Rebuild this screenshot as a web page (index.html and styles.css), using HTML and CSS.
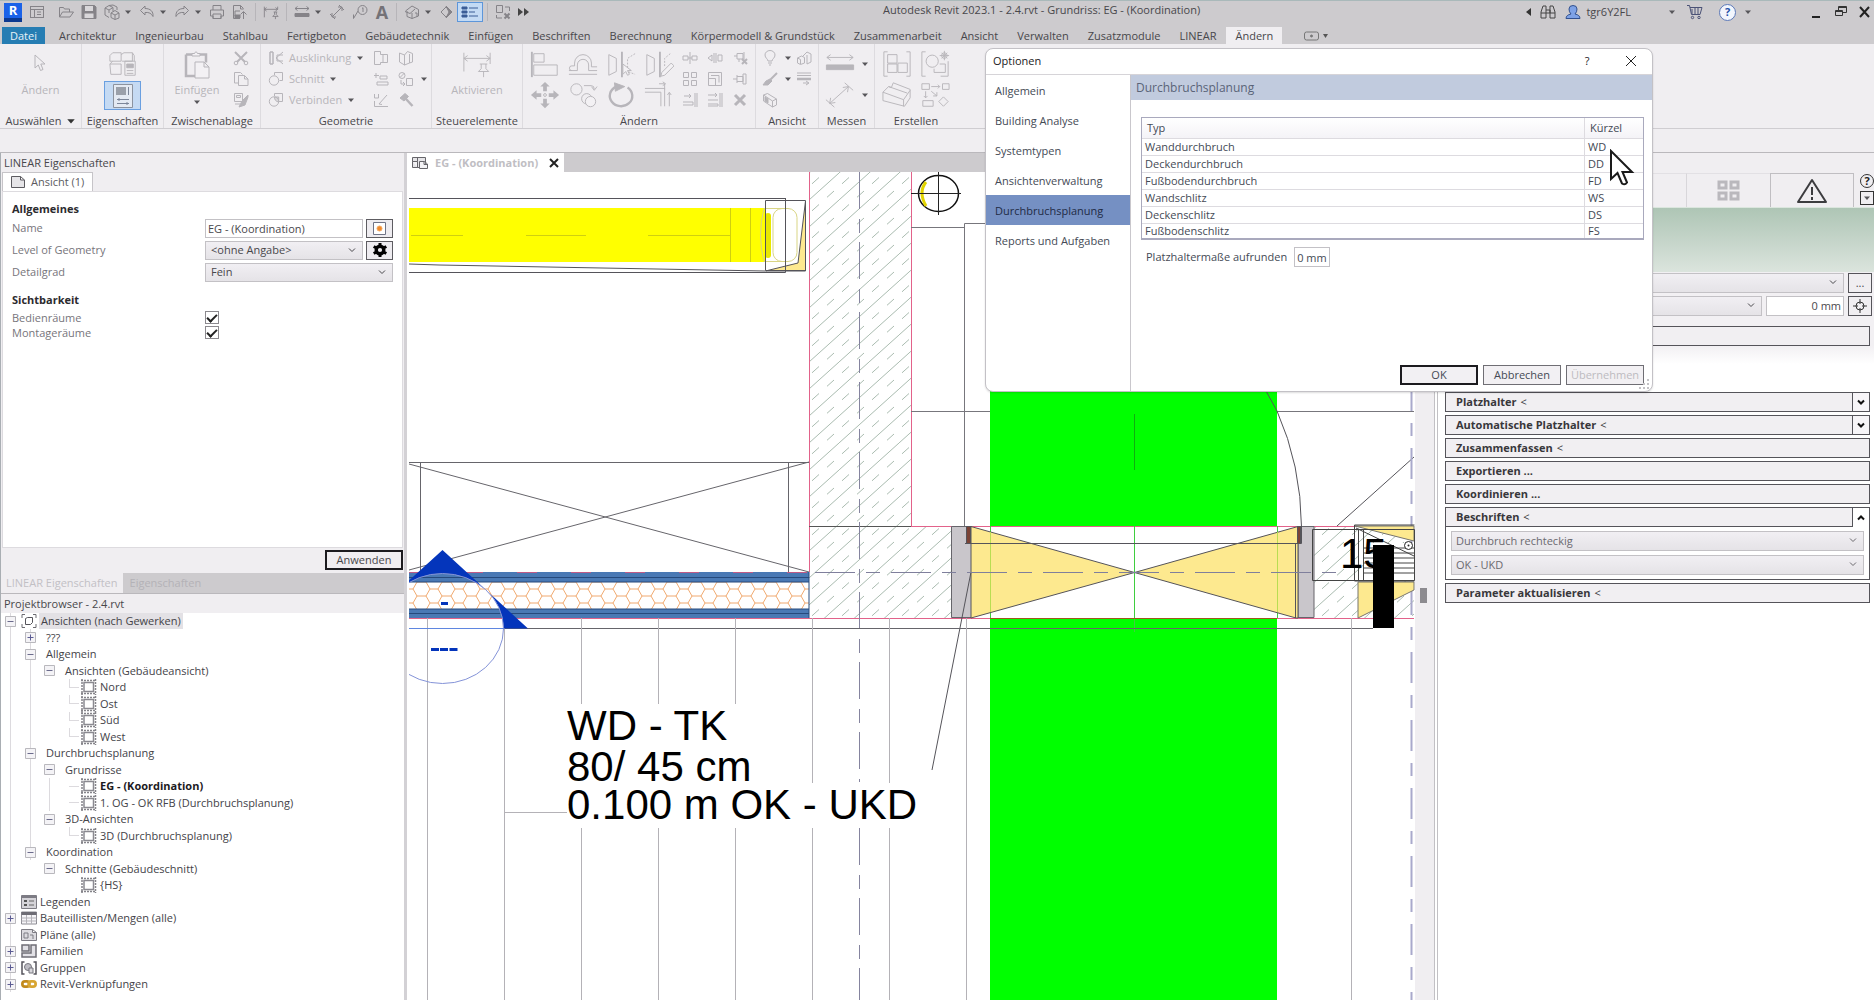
FILE: index.html
```html
<!DOCTYPE html>
<html lang="de">
<head>
<meta charset="utf-8">
<title>Autodesk Revit 2023.1 - 2.4.rvt - Grundriss: EG - (Koordination)</title>
<link rel="stylesheet" href="styles.css">
</head>
<body>
<svg class="defs" width="0" height="0" aria-hidden="true">
  <symbol id="caret" viewBox="0 0 8 8"><path d="M1 2.500h6L4 6z" fill="currentColor" stroke="none"/></symbol>
  <symbol id="chev" viewBox="0 0 10 8"><path d="M2 2.500l3 3 3-3"/></symbol>
  <symbol id="home" viewBox="0 0 16 16"><rect x="1.500" y="2.500" width="13" height="11"/><path d="M1.500 5.500h13M5.500 5.500v8M8 8h4M8 10.500h4" /></symbol>
  <symbol id="open" viewBox="0 0 16 16"><path d="M1.500 13V3.500h4l1 1.500h5v3M1.500 13l3-5h11l-3.500 5z"/></symbol>
  <symbol id="save" viewBox="0 0 16 16"><path d="M1 1.500h12.500L15 3v11.500H1z" fill="currentColor"/><path d="M4 2h8v5H4z" fill="#d9d7da" stroke="none"/><path d="M3.500 9.500h9v4.500h-9z" fill="#d9d7da" stroke="none"/></symbol>
  <symbol id="sync" viewBox="0 0 16 16"><path d="M1 4l4-2.500 4 2v4M1 4v7l4 2.500M1 4l4 2 4-2.500M5 6v3M7 9l4-2.500L15 9v5l-4 1.500L7 13.500zM7 9l4 2 4-2M11 11v4.500M5 1.500L9 1l4 2v3"/></symbol>
  <symbol id="undo" viewBox="0 0 16 16"><path d="M6 2L1.500 6.500 6 11V8.500c4-.5 6.500 1 8 4 .5-5-2.500-8-8-8z"/></symbol>
  <symbol id="redo" viewBox="0 0 16 16"><path d="M10 2l4.500 4.500L10 11V8.500c-4-.5-6.500 1-8 4-.5-5 2.500-8 8-8z"/></symbol>
  <symbol id="print" viewBox="0 0 16 16"><path d="M4 6V1.500h8V6M1.500 6h13v6h-2.500v2.500H4V12H1.500zM4 10h8v4.500H4z"/></symbol>
  <symbol id="export" viewBox="0 0 16 16"><path d="M8 14.500H1.500v-13h7l3 3M8.500 1.500V5h3M3 12V7h5M11.500 15V8M8.500 10.500l3-3 3 3"/><path d="M3 11h5v3H3z" fill="currentColor"/></symbol>
  <symbol id="dimpin" viewBox="0 0 18 16"><path d="M1.500 2v12M16.500 2v3M1.500 5h15M4 3L1.500 5 4 7M14 3l2.500 2L14 7M12 8h4M13 8v3l-2 2h6l-2-2V8M14 13v3"/></symbol>
  <symbol id="measure" viewBox="0 0 16 16"><path d="M1 4.500h14M3.500 2.500l-2.500 2 2.500 2M12.500 2.500l2.500 2-2.500 2"/><path d="M1 9.500h14v3H1z" fill="currentColor"/></symbol>
  <symbol id="aligned" viewBox="0 0 16 16"><path d="M3 13L13 3M3 13v-4M3 13h4M13 3v4M13 3H9M1 10l5 5M10 1l5 5"/></symbol>
  <symbol id="tag" viewBox="0 0 16 16"><circle cx="10.500" cy="6" r="4.500"/><path d="M6 7L1.500 14.500M1.500 14.500v-4M10 4.500l1-.8V8"/></symbol>
  <symbol id="house" viewBox="0 0 16 16"><path d="M1.500 7L8 2l6.500 3.500V12L8 14.500l-5-2V7M1 7.500l5 2L11 5M8 14.500V9M11 9h2v4"/></symbol>
  <symbol id="section" viewBox="0 0 16 16"><path d="M3 8l5-5 5 5-5 5z"/><path d="M8 2l6 6-6 6 3-6z" fill="currentColor"/></symbol>
  <symbol id="lines" viewBox="0 0 24 18"><path d="M4 4h5v2H4zM4 8h5v2H4zM4 12h5v2H4z" fill="#3a5d96" stroke="#3a5d96"/><path d="M11 5h9M11 9h6M11 13h9" stroke="#3a5d96"/></symbol>
  <symbol id="closewin" viewBox="0 0 16 16"><path d="M1.500 1.500h6v7h-6zM10 3h4.500v4M1.500 11v3H7"/><path d="M9.500 9.500l5 5M14.500 9.500l-5 5" stroke-width="2"/></symbol>
  <symbol id="cursor" viewBox="0 0 16 18"><path d="M3 1v13l3.300-3 2.200 5.500 2.500-1L8.800 10H13z"/></symbol>
  <symbol id="typeprops" viewBox="0 0 32 28"><path d="M2 5l3-3h9v9H2zM14 4l3-2h9v9H15M2 14h12v11H3zM2 14l3-3M26 2l2 3v6"/><path d="M18 11h11v15H18z"/><path d="M20 14h7v4h-7z" fill="currentColor"/><path d="M20 21h7M20 24h7"/></symbol>
  <symbol id="props" viewBox="0 0 22 26"><path d="M1.500 1.500h19v23h-19z" fill="#e4eaf3" stroke="#8c939f"/><path d="M4 4h10v8H4z" fill="#9aa0aa" stroke="none"/><path d="M16.500 4v8M5 16.500h12M5 20.500h12M7 15v3M15 19v3" stroke="#7c8699"/></symbol>
  <symbol id="paste" viewBox="0 0 28 30"><path d="M3 4.500h20v8M3 4.500V26h9" stroke-width="2.500"/><path d="M9 6V3.500h2.500Q13 0 14.500 3.500H17V6zM12 12h9l5 5v11H12zM21 12v5h5" fill="#f3f1f4"/></symbol>
  <symbol id="cut" viewBox="0 0 16 16"><path d="M2 2l10 10M14 2L4 12" stroke-width="2"/><circle cx="3" cy="13" r="1.800"/><circle cx="13" cy="13" r="1.800"/></symbol>
  <symbol id="copy" viewBox="0 0 16 16"><path d="M5 12H1.500V1.500h6l2 2M5.500 4.500h6l3.500 3.500v6.500H5.500zM11.500 4.500V8H15"/></symbol>
  <symbol id="match" viewBox="0 0 16 16"><path d="M1.500 1.500h8v8h-8zM3.500 3.500h4v2h-4zM2 12h5"/><path d="M15 3L9 9l-3 6 6-2 3-8z" fill="currentColor"/></symbol>
  <symbol id="cope" viewBox="0 0 16 16"><path d="M2 2v12M5 2v12M2 2h3M2 14h3" stroke-width="1.500"/><path d="M15 2L8 8l7 6M15 5H9v6h6"/></symbol>
  <symbol id="cutgeo" viewBox="0 0 16 16"><path d="M6.500 4V1.500h8v8h-3"/><circle cx="6" cy="9.500" r="4.700"/></symbol>
  <symbol id="joingeo" viewBox="0 0 16 16"><path d="M6.500 4V1.500h8v8h-3.500"/><circle cx="6" cy="9.500" r="4.700"/><path d="M6.500 5h4.200v5a5 5 0 0 1-4.200-5z" fill="currentColor" fill-opacity=".4"/></symbol>
  <symbol id="wall1" viewBox="0 0 16 16"><path d="M1.500 1.500h6v3h7v8h-7v2h-6zM10 5v7"/></symbol>
  <symbol id="wall2" viewBox="0 0 16 16"><path d="M1.500 3l5 2 3-3.500 5 2V12l-3 1-5 2-5-3zM6.500 5v10M11.500 4v9"/></symbol>
  <symbol id="beam" viewBox="0 0 16 16"><path d="M3 2v5M1 4.500h5M7 5h7v3H7zM4 11h11v3H4z"/></symbol>
  <symbol id="roof" viewBox="0 0 16 16"><circle cx="4" cy="4.500" r="3"/><path d="M2 6.500L6.500 2M8.500 7.500h6v7h-6zM3 9v4h4M5 11l2 2-2 2"/></symbol>
  <symbol id="split" viewBox="0 0 16 16"><path d="M1.500 2v4h4V2M1.500 9v5.500H15M6 12l8-9M6 12l3 .5"/></symbol>
  <symbol id="hammer" viewBox="0 0 16 16"><path d="M2 6l5-4.500 3.500 3L6 9z" fill="currentColor"/><path d="M8 7l6.500 7" stroke-width="2.500"/></symbol>
  <symbol id="activate" viewBox="0 0 32 28"><path d="M2 2v20M30 2v12M2 8h28M6 5L2 8l4 3M26 5l4 3-4 3M19 14h8M20.500 14v5l-3 3h11l-3-3v-5M23 22v6"/></symbol>
  <symbol id="align" viewBox="0 0 32 28"><path d="M2 1v27" stroke-width="2"/><path d="M4 3h11v9H4zM4 15h25v11H4z"/></symbol>
  <symbol id="offset" viewBox="0 0 32 28"><path d="M1 25h30M1 21h9v-6a6 6 0 0 1 12 0v6h9M4 21a2.500 2.500 0 0 1 0-5h3v-3a9 9 0 0 1 18 0v4h6"/></symbol>
  <symbol id="mirror1" viewBox="0 0 32 28"><path d="M3 4l8 4v14l-8 4z"/><path d="M17 1v27" stroke-width="2"/><path d="M31 3l-8 5v14l8 3" stroke-dasharray="2 1.500"/><path d="M18 14v11l3-3 2 4 2-1-2-4h4z" fill="#f3f1f4"/></symbol>
  <symbol id="mirror2" viewBox="0 0 32 28"><path d="M3 4l8 4v14l-8 4z"/><path d="M17 1v27" stroke-width="2"/><path d="M28 3l-6 5v9" stroke-dasharray="2 1.500"/><path d="M29 13l3 3-10 10-4 1 1-4z" fill="#f3f1f4"/></symbol>
  <symbol id="move" viewBox="0 0 32 28"><path d="M16 0l5 5h-3v5h-4V5h-3zM16 28l5-5h-3v-5h-4v5h-3zM1 14l6-5v3h5v4H7v3zM31 14l-6-5v3h-5v4h5v3z" fill="currentColor" stroke="none"/><circle cx="16" cy="14" r="1.500"/></symbol>
  <symbol id="copyobj" viewBox="0 0 32 28"><circle cx="9" cy="8" r="6"/><circle cx="20" cy="18" r="5.500"/><circle cx="24" cy="21" r="5.500" fill="#f3f1f4"/><path d="M17 4h8q3 0 3 4M25 5l3 4 3-4"/></symbol>
  <symbol id="rotate" viewBox="0 0 32 28"><path d="M11 5a12 11 0 1 0 12 1" stroke-width="2.500"/><path d="M9 1l11 4-10 5z" fill="currentColor"/></symbol>
  <symbol id="trim" viewBox="0 0 32 28"><path d="M1 7h21v19M1 11h17v15M22 2v6M16 2h6M20 0l3 2-3 2M27 26V12M25 14l2-3 2 3"/></symbol>
  <symbol id="splitel" viewBox="0 0 16 16"><path d="M8 2v12M1 6h5v4H1zM10 6h5v4h-5zM6 8h4"/></symbol>
  <symbol id="gap" viewBox="0 0 16 16"><path d="M1 8l4-3v6zM7 3v10M9 3v10M11 5h4v6h-4z"/></symbol>
  <symbol id="unpin" viewBox="0 0 16 16"><path d="M2 6h3V3.500h6V9H5V6M7 9v3M12 2v8"/><path d="M10 9l5 5M15 9l-5 5" stroke-width="2"/></symbol>
  <symbol id="array" viewBox="0 0 16 16"><path d="M1.500 1.500h5v5h-5zM9.500 1.500h5v5h-5zM1.500 9.500h5v5h-5zM9.500 9.500h5v5h-5z"/></symbol>
  <symbol id="scale" viewBox="0 0 16 16"><path d="M1.500 1.500h13v13h-13zM1.500 7.500h7v7M4 4.500h8v7" /></symbol>
  <symbol id="pin" viewBox="0 0 16 16"><path d="M1 8h4M5 4v8M5 5.500h6v5H5M11 3v10h3V3z"/></symbol>
  <symbol id="trim1" viewBox="0 0 16 16"><path d="M13 1v14M15 1v14M2 4h7M7 2l2 2-2 2M1 10h10v3H1"/></symbol>
  <symbol id="trim2" viewBox="0 0 16 16"><path d="M13 1v14M15 1v14M1 3h9M8 1l2 2-2 2M1 8h10M1 12h10v2H1"/></symbol>
  <symbol id="delete" viewBox="0 0 16 16"><path d="M3 3l10 10M13 3L3 13" stroke-width="3"/></symbol>
  <symbol id="bulb" viewBox="0 0 16 16"><path d="M6 11c0-2-3-3-3-6a5 4.500 0 0 1 10 0c0 3-3 4-3 6zM6 13h4M7 15h2"/></symbol>
  <symbol id="brush" viewBox="0 0 16 16"><path d="M15 2L8 9" stroke-width="2"/><path d="M8 8l2 2-4 4H1l3-4z" fill="currentColor"/></symbol>
  <symbol id="box" viewBox="0 0 16 16"><path d="M1.500 3l4-1.500 9 5.500v6l-4 2-9-6zM1.500 3l9 6 4-2M10.500 9v6"/><path d="M3 5l3 2v4L3 9z" fill="currentColor"/></symbol>
  <symbol id="boxes" viewBox="0 0 16 16"><path d="M1.500 8l4-2 3 1.500V13l-4 1.500-3-1.500zM7 6l4-4 4 2v8l-4 2M11 5v9M1.500 8l3 1.500V14"/></symbol>
  <symbol id="linew" viewBox="0 0 16 16"><path d="M1 2h14M1 4.500h14"/><path d="M1 8h14" stroke-width="2.500"/><path d="M7 12h5M10 10l3 2-3 2"/></symbol>
  <symbol id="mea1" viewBox="0 0 32 24"><path d="M2 5h28M6 2L2 5l4 3M26 2l4 3-4 3"/><path d="M1.500 13h29v5h-29z" fill="currentColor"/></symbol>
  <symbol id="mea2" viewBox="0 0 32 28"><path d="M5 23L25 5M5 23l1-6M5 23l6-1M25 5l-1 6M25 5l-6 1M1 19l9 8M21 1l9 8"/></symbol>
  <symbol id="grp1" viewBox="0 0 32 28"><path d="M6 1H2v26h4M26 1h4v26h-4M6 4h10v9H6zM6 14h10v9H6zM17 13h10v10H17z"/></symbol>
  <symbol id="grp2" viewBox="0 0 32 28"><path d="M6 1H2v26h4M22 27h8V11M21 14h6v9H15v-4"/><circle cx="13" cy="11" r="6.500"/><circle cx="26" cy="5" r="3"/><path d="M26 0v10M21 5h10M23 2l6 6M29 2l-6 6"/></symbol>
  <symbol id="asm" viewBox="0 0 32 28"><path d="M1 11l6-6 3 1 2-5 18 7v9l-6 9L1 20zM1 11l22 8 7-10M23 19v7M7 5l20 7"/></symbol>
  <symbol id="similar" viewBox="0 0 32 28"><path d="M2 2h8v6H2zM24 2h7v6h-7zM3 20h11v6H3zM25 16l5 5-5 5-5-5zM12 5h9M19 3l2 2-2 2M6 10v7M4 15l2 2 2-2M12 10l6 5M18 11v4h-4"/></symbol>
  <symbol id="sheet" viewBox="0 0 16 14"><path d="M1.500 1.500h9l4 3.500v7.500h-13zM10.500 1.500V5h4" fill="#e6e5e8"/></symbol>
  <symbol id="viewtab" viewBox="0 0 16 14"><path d="M.5 1.500h13v10H.5z" fill="#e6e5e8"/><path d="M.5 5.500h5v6M5.500 1.500v4M7.500 12.500v-7h5l3 2.500v4.500zM12 5.500v3h3" fill="#f4f3f6"/></symbol>
  <symbol id="minus" viewBox="0 0 11 11"><path d="M.5.5h10v10H.5z" fill="#f4f3f6" stroke="#b9b8bd"/><path d="M2.500 5.500h6" stroke="#6b6b8c"/></symbol>
  <symbol id="plus" viewBox="0 0 11 11"><path d="M.5.5h10v10H.5z" fill="#f4f3f6" stroke="#b9b8bd"/><path d="M2.500 5.500h6M5.500 2.500v6" stroke="#5c5c93"/></symbol>
  <symbol id="view" viewBox="0 0 17 16"><path d="M1 1.500h15M2 0v16M15.500 0v16M1 14.500h15" stroke="#85848a" stroke-width="1.500" stroke-dasharray="2 1"/><rect x="4" y="3.500" width="9.500" height="9" fill="#fff" stroke="#8b8a91" stroke-width="1.500"/></symbol>
  <symbol id="views" viewBox="0 0 16 14"><path d="M4 .5H1V4M12 .5h3V4M4 13.500H1V10M12 13.500h3V10" stroke="#6d6c72"/><path d="M4.500 4.500l2-1h5v5l-2 2h-5z" stroke="#55545a"/></symbol>
  <symbol id="legend" viewBox="0 0 16 14"><path d="M.5.500h15v13H.5z" fill="#d5d4d9" stroke="#7d7c84"/><path d="M.5 2h15" stroke="#7d7c84" stroke-width="2"/><path d="M3 5h3v2H3zM3 9h3v2H3z" fill="#555" stroke="none"/><path d="M8 6h5M8 10h5" stroke="#666"/></symbol>
  <symbol id="sched" viewBox="0 0 16 14"><path d="M.5 1h15v12H.5z" fill="#f6f5f8" stroke="#8d8c94"/><path d="M.5 2.500h15" stroke="#6d6c74" stroke-width="3"/><path d="M.5 7h15M.5 10h15M5.500 4v9M10.500 4v9" stroke="#b3b2b8"/></symbol>
  <symbol id="plan" viewBox="0 0 16 14"><path d="M.5 1.500h11l4 3v8H.5zM11.500 1.500v3h4M3 10V5h4v5zM9 7h3v4" fill="#dcdbe0" stroke="#7d7c84"/></symbol>
  <symbol id="family" viewBox="0 0 16 14"><path d="M1 1h7v6H1zM10 1h5v12H1v-4h9z" fill="#e2e1e6" stroke="#6f6e76" stroke-width="1.500"/></symbol>
  <symbol id="group" viewBox="0 0 16 14"><path d="M3.500 1H1v12h2.500M12.500 1H15v12h-2.500" stroke="#55545c" stroke-width="1.500"/><circle cx="7" cy="6" r="3.500" fill="#bfbec5" stroke="#77767e"/><path d="M8 7h4v5H8z" fill="#d8d7dc" stroke="#77767e"/></symbol>
  <symbol id="link" viewBox="0 0 18 14"><rect x="1.500" y="4" width="8" height="6" rx="3" stroke="#c28a1c" stroke-width="3"/><rect x="8.500" y="4" width="8" height="6" rx="3" stroke="#d8a531" stroke-width="3"/></symbol>
</svg>

<header class="titlebar">
  <div class="quick">
    <button class="logo" aria-label="Revit">R</button>
    <button aria-label="Start"><svg class="i16"><use href="#home"/></svg></button>
    <button class="gapl" aria-label="Öffnen"><svg class="i16"><use href="#open"/></svg></button>
    <button aria-label="Speichern"><svg class="i16"><use href="#save"/></svg></button>
    <button aria-label="Synchronisieren"><svg class="i16"><use href="#sync"/></svg><svg class="car"><use href="#caret"/></svg></button>
    <button aria-label="Rückgängig"><svg class="i16"><use href="#undo"/></svg><svg class="car"><use href="#caret"/></svg></button>
    <button aria-label="Wiederholen"><svg class="i16"><use href="#redo"/></svg><svg class="car"><use href="#caret"/></svg></button>
    <button aria-label="Drucken"><svg class="i16"><use href="#print"/></svg></button>
    <button aria-label="PDF"><svg class="i16"><use href="#export"/></svg></button>
    <i class="vsep"></i>
    <button aria-label="Bemaßung"><svg class="i16"><use href="#dimpin"/></svg></button>
    <i class="vsep"></i>
    <button aria-label="Messen"><svg class="i16"><use href="#measure"/></svg><svg class="car"><use href="#caret"/></svg></button>
    <button aria-label="Ausgerichtet"><svg class="i16"><use href="#aligned"/></svg></button>
    <button aria-label="Beschriftung"><svg class="i16"><use href="#tag"/></svg></button>
    <button class="letter" aria-label="Text">A</button>
    <i class="vsep"></i>
    <button aria-label="3D"><svg class="i16"><use href="#house"/></svg><svg class="car"><use href="#caret"/></svg></button>
    <button class="narrow" aria-label="Schnitt"><svg class="i16"><use href="#section"/></svg></button>
    <button class="on" aria-label="Dünne Linien"><svg width="24" height="18"><use href="#lines"/></svg></button>
    <i class="vsep"></i>
    <button aria-label="Fenster schließen"><svg class="i16"><use href="#closewin"/></svg></button>
    <button aria-label="Mehr"><svg width="12" height="8" stroke="none"><path d="M0 0l5 4-5 4zM6 0l5 4-5 4z" fill="#444"/></svg></button>
  </div>
  <h1>Autodesk Revit 2023.1 - 2.4.rvt - Grundriss: EG - (Koordination)</h1>
  <div class="account">
    <svg width="5" height="8" stroke="none"><path d="M5 0v8L0 4z" fill="#333"/></svg>
    <button aria-label="Suchen"><svg width="18" height="16" stroke="#444"><path d="M2 14V8l2-6h3v12zM16 14V8l-2-6h-3v12zM7 6h4v3H7M2 9h5M11 9h5"/></svg></button>
    <button class="user"><svg width="16" height="16" viewBox="0 0 16 16" stroke="#31508f"><path fill="#7ea2e6" d="M1 14.500q0-3.500 5-4.500-2-2-2-5 0-3.500 4-3.500t4 3.500q0 3-2 5 5 1 5 4.500z"/></svg>tgr6Y2FL</button>
    <svg class="car late"><use href="#caret"/></svg>
    <button aria-label="Warenkorb"><svg width="17" height="16" stroke="#4b5276"><path d="M1 1.500h2.500l2 9H14l2-7H4M6 5v5M9 4v6M12 4v6" fill="none"/><circle cx="6.500" cy="13.500" r="1.200"/><circle cx="13" cy="13.500" r="1.200"/></svg></button>
    <button class="help" aria-label="Hilfe">?</button>
    <svg class="car"><use href="#caret"/></svg>
  </div>
  <div class="winbtns">
    <button aria-label="Minimieren"><svg width="14" height="14" stroke="#222" stroke-width="2"><path d="M2 12h8"/></svg></button>
    <button aria-label="Wiederherstellen"><svg width="14" height="14" stroke="#333"><path d="M1.500 5.500h7v5h-7zM1.500 6.500h7M4.500 5V1.500h8v6H9M4.500 2.500h8"/></svg></button>
    <button aria-label="Schließen"><svg width="14" height="14" stroke="#222" stroke-width="2"><path d="M2 2l9 10M11 2L2 12"/></svg></button>
  </div>
</header>

<nav class="tabs">
  <a class="file" href="#">Datei</a><a href="#">Architektur</a><a href="#">Ingenieurbau</a><a href="#">Stahlbau</a><a href="#">Fertigbeton</a><a href="#">Gebäudetechnik</a><a href="#">Einfügen</a><a href="#">Beschriften</a><a href="#">Berechnung</a><a href="#">Körpermodell &amp; Grundstück</a><a href="#">Zusammenarbeit</a><a href="#">Ansicht</a><a href="#">Verwalten</a><a href="#">Zusatzmodule</a><a href="#">LINEAR</a><a class="active" href="#">Ändern</a>
  <button class="tabmenu" aria-label="Multifunktionsleiste"><svg width="26" height="10" stroke="#777"><rect x=".5" y="1" width="14" height="8" rx="2"/><circle cx="7.500" cy="5" r="1" fill="#777"/><path d="M19 3h5l-2.500 4z" fill="#555" stroke="none"/></svg></button>
</nav>

<div class="ribbon">
  <section class="g-sel"><div class="tools">
    <button class="big"><svg width="16" height="18"><use href="#cursor"/></svg><span>Ändern</span></button></div>
    <h2>Auswählen <svg class="car wide"><use href="#caret"/></svg></h2></section>
  <section class="g-prop"><div class="tools col">
    <button aria-label="Typeneigenschaften"><svg class="i32"><use href="#typeprops"/></svg></button>
    <button class="on" aria-label="Eigenschaften"><svg width="22" height="26"><use href="#props"/></svg></button></div>
    <h2>Eigenschaften</h2></section>
  <section class="g-clip"><div class="tools">
    <button class="big paste"><svg width="28" height="30"><use href="#paste"/></svg><span>Einfügen</span><svg class="car"><use href="#caret"/></svg></button>
    <div class="small"><button aria-label="Ausschneiden"><svg class="i16"><use href="#cut"/></svg></button><button aria-label="Kopieren"><svg class="i16"><use href="#copy"/></svg></button><button aria-label="Eigenschaften anpassen"><svg class="i16"><use href="#match"/></svg></button></div></div>
    <h2>Zwischenablage</h2></section>
  <section class="g-geo"><div class="tools">
    <div class="small words"><button><svg class="i16"><use href="#cope"/></svg>Ausklinkung<svg class="car"><use href="#caret"/></svg></button><button><svg class="i16"><use href="#cutgeo"/></svg>Schnitt<svg class="car"><use href="#caret"/></svg></button><button><svg class="i16"><use href="#joingeo"/></svg>Verbinden<svg class="car"><use href="#caret"/></svg></button></div>
    <div class="small"><button aria-label="Wand"><svg class="i16"><use href="#wall1"/></svg></button><button aria-label="Träger"><svg class="i16"><use href="#beam"/></svg></button><button aria-label="Teilen"><svg class="i16"><use href="#split"/></svg></button></div>
    <div class="small"><button aria-label="Wandverbindung"><svg class="i16"><use href="#wall2"/></svg></button><button aria-label="Fläche"><svg class="i16"><use href="#roof"/></svg><svg class="car"><use href="#caret"/></svg></button><button aria-label="Abbruch"><svg class="i16"><use href="#hammer"/></svg></button></div></div>
    <h2>Geometrie</h2></section>
  <section class="g-ctl"><div class="tools">
    <button class="big wide"><svg class="i32"><use href="#activate"/></svg><span>Aktivieren</span></button></div>
    <h2>Steuerelemente</h2></section>
  <section class="g-mod"><div class="tools">
    <div class="large four"><button aria-label="Ausrichten"><svg class="i32"><use href="#align"/></svg></button><button aria-label="Versetzen"><svg class="i32"><use href="#offset"/></svg></button><button aria-label="Spiegeln Achse"><svg class="i32"><use href="#mirror1"/></svg></button><button aria-label="Spiegeln zeichnen"><svg class="i32"><use href="#mirror2"/></svg></button><button aria-label="Verschieben"><svg class="i32"><use href="#move"/></svg></button><button aria-label="Kopieren"><svg class="i32"><use href="#copyobj"/></svg></button><button aria-label="Drehen"><svg class="i32"><use href="#rotate"/></svg></button><button aria-label="Stutzen"><svg class="i32"><use href="#trim"/></svg></button></div>
    <div class="small three"><button aria-label="Element teilen"><svg class="i16"><use href="#splitel"/></svg></button><button aria-label="Lücke"><svg class="i16"><use href="#gap"/></svg></button><button aria-label="Lösen"><svg class="i16"><use href="#unpin"/></svg></button><button aria-label="Reihe"><svg class="i16"><use href="#array"/></svg></button><button aria-label="Skalieren"><svg class="i16"><use href="#scale"/></svg></button><button aria-label="Fixieren"><svg class="i16"><use href="#pin"/></svg></button><button aria-label="Dehnen"><svg class="i16"><use href="#trim1"/></svg></button><button aria-label="Mehrere dehnen"><svg class="i16"><use href="#trim2"/></svg></button><button aria-label="Löschen"><svg class="i16"><use href="#delete"/></svg></button></div></div>
    <h2>Ändern</h2></section>
  <section class="g-view"><div class="tools">
    <div class="small"><button aria-label="Ausblenden"><svg class="i16"><use href="#bulb"/></svg><svg class="car"><use href="#caret"/></svg></button><button aria-label="Überschreiben"><svg class="i16"><use href="#brush"/></svg><svg class="car"><use href="#caret"/></svg></button><button aria-label="Auswahlrahmen"><svg class="i16"><use href="#box"/></svg></button></div>
    <div class="small"><button aria-label="Verdrängen"><svg class="i16"><use href="#boxes"/></svg></button><button aria-label="Linienart"><svg class="i16"><use href="#linew"/></svg></button></div></div>
    <h2>Ansicht</h2></section>
  <section class="g-mea"><div class="tools">
    <div class="large one"><button aria-label="Messen"><svg class="i32"><use href="#mea1"/></svg><svg class="car"><use href="#caret"/></svg></button><button aria-label="Bemaßung"><svg class="i32"><use href="#mea2"/></svg><svg class="car"><use href="#caret"/></svg></button></div></div>
    <h2>Messen</h2></section>
  <section class="g-new"><div class="tools">
    <div class="large two"><button aria-label="Baugruppe"><svg class="i32"><use href="#grp1"/></svg></button><button aria-label="Gruppe"><svg class="i32"><use href="#grp2"/></svg></button><button aria-label="Teile"><svg class="i32"><use href="#asm"/></svg></button><button aria-label="Ähnliches"><svg class="i32"><use href="#similar"/></svg></button></div></div>
    <h2>Erstellen</h2></section>
</div>
<div class="optionbar"></div>

<main class="work">
  <aside class="left">
    <h2 class="ptitle">LINEAR Eigenschaften</h2>
    <button class="ptab"><svg width="16" height="14"><use href="#sheet"/></svg>Ansicht (1)</button>
    <form class="props">
      <h3>Allgemeines</h3>
      <div class="row"><label for="nm">Name</label><input id="nm" type="text" value="EG - (Koordination)"><button type="button" class="sq" aria-label="Auswählen"><svg width="13" height="13" stroke="#6f7386"><path d="M.5.500h12v12H.5z" fill="#fff"/><circle cx="6.500" cy="6.500" r="2.500" fill="#f08a2c" stroke="#f4a75f"/></svg></button></div>
      <div class="row"><label for="lg">Level of Geometry</label><span class="sel"><select id="lg"><option>&lt;ohne Angabe&gt;</option></select><svg class="chv"><use href="#chev"/></svg></span><button type="button" class="sq" aria-label="Einstellungen"><svg width="16" height="14" viewBox="0 0 16 14"><circle cx="8" cy="7" r="3.800" stroke="#000" stroke-width="3.400"/><path d="M8 0v2.500M8 11.500V14M1.700 3.500l2.300 1.300M12 9.200l2.300 1.300M1.700 10.500L4 9.200M12 4.800l2.300-1.300" stroke="#000" stroke-width="3"/></svg></button></div>
      <div class="row"><label for="dg">Detailgrad</label><span class="sel"><select id="dg"><option>Fein</option></select><svg class="chv"><use href="#chev"/></svg></span></div>
      <h3>Sichtbarkeit</h3>
      <div class="row chk"><label for="br">Bedienräume</label><input id="br" type="checkbox" checked></div>
      <div class="row chk"><label for="mr">Montageräume</label><input id="mr" type="checkbox" checked></div>
    </form>
    <div class="apply"><button class="default">Anwenden</button></div>
    <div class="docktabs"><a class="cur" href="#">LINEAR Eigenschaften</a><a href="#">Eigenschaften</a></div>
    <h2 class="ptitle browser">Projektbrowser - 2.4.rvt</h2>
    <ul class="tree">
      <li class="l0"><svg class="bx"><use href="#minus"/></svg><svg class="ic"><use href="#views"/></svg><span class="hl">Ansichten (nach Gewerken)</span></li>
      <li class="l1"><svg class="bx"><use href="#plus"/></svg>???</li>
      <li class="l1"><svg class="bx"><use href="#minus"/></svg>Allgemein</li>
      <li class="l2"><svg class="bx"><use href="#minus"/></svg>Ansichten (Gebäudeansicht)</li>
      <li class="l3"><svg class="vw"><use href="#view"/></svg>Nord</li>
      <li class="l3"><svg class="vw"><use href="#view"/></svg>Ost</li>
      <li class="l3"><svg class="vw"><use href="#view"/></svg>Süd</li>
      <li class="l3"><svg class="vw"><use href="#view"/></svg>West</li>
      <li class="l1"><svg class="bx"><use href="#minus"/></svg>Durchbruchsplanung</li>
      <li class="l2"><svg class="bx"><use href="#minus"/></svg>Grundrisse</li>
      <li class="l3 more"><svg class="vw"><use href="#view"/></svg><b>EG - (Koordination)</b></li>
      <li class="l3 more"><svg class="vw"><use href="#view"/></svg>1. OG - OK RFB (Durchbruchsplanung)</li>
      <li class="l2"><svg class="bx"><use href="#minus"/></svg>3D-Ansichten</li>
      <li class="l3"><svg class="vw"><use href="#view"/></svg>3D (Durchbruchsplanung)</li>
      <li class="l1"><svg class="bx"><use href="#minus"/></svg>Koordination</li>
      <li class="l2 end"><svg class="bx"><use href="#minus"/></svg>Schnitte (Gebäudeschnitt)</li>
      <li class="l3 end"><svg class="vw"><use href="#view"/></svg>{HS}</li>
      <li class="l0"><i class="bx"></i><svg class="ic"><use href="#legend"/></svg>Legenden</li>
      <li class="l0"><svg class="bx"><use href="#plus"/></svg><svg class="ic"><use href="#sched"/></svg>Bauteillisten/Mengen (alle)</li>
      <li class="l0"><i class="bx"></i><svg class="ic"><use href="#plan"/></svg>Pläne (alle)</li>
      <li class="l0"><svg class="bx"><use href="#plus"/></svg><svg class="ic"><use href="#family"/></svg>Familien</li>
      <li class="l0"><svg class="bx"><use href="#plus"/></svg><svg class="ic"><use href="#group"/></svg>Gruppen</li>
      <li class="l0"><svg class="bx"><use href="#plus"/></svg><svg class="ic"><use href="#link"/></svg>Revit-Verknüpfungen</li>
    </ul>
  </aside>

  <section class="center">
    <div class="viewtabs"><div class="vtab"><svg width="16" height="14"><use href="#viewtab"/></svg><span>EG - (Koordination)</span><button aria-label="Schließen"><svg width="12" height="12" stroke="#222" stroke-width="2"><path d="M2 2l8 8M10 2l-8 8"/></svg></button></div></div>
    <div class="canvas">
      <svg class="drawing" viewBox="409 172 1006 828" preserveAspectRatio="xMinYMin slice" role="img" aria-label="Grundriss">
        <defs>
          <pattern id="hatch" x="809" y="200" width="30" height="27" patternUnits="userSpaceOnUse"><path d="M0 27L30 0M3 10.800L10 4.500M18 24.300L25 18" stroke="#93aa9a" stroke-width=".8"/></pattern>
          <pattern id="hex" x="409" y="582" width="25" height="14" patternUnits="userSpaceOnUse"><path d="M0 7h4l4-7h9l4 7h4M4 7l4 7h9l4-7" stroke="#f0a970"/></pattern>
        </defs>
        <g stroke="#55545a">
          <path d="M409 198.500H785.500V272.500H409" />
          <path d="M409 208h361v54H409z" fill="#ff0" stroke="none"/>
          <path d="M730.500 208v54M750.500 208v54M411 235.500h52M526 235.500h60M648 235.500h82" stroke="#cfcf10"/>
          <path d="M765.500 271L798 263l7.500-62v70z" fill="#fde98f"/>
          <path d="M766 208h8v5h-4v45h4v4h-8z" fill="#fff" stroke="none"/>
          <rect x="773" y="208.500" width="24" height="53" rx="9" fill="#fff" stroke="#d9d585"/><path d="M764 261.500q-7-27 0-53h22M764 261.500h20" stroke="#d9d585"/>
          <rect x="765" y="213" width="6" height="45" rx="3" fill="#e8e800" stroke="none"/>
          <path d="M765.500 200.500h40v70h-40zM409 264l30 1 326 6M785.500 198v74"/>
        </g>
        <!-- concrete walls -->
        <path d="M809 172h102v354h40v92H809z" fill="url(#hatch)"/>
        <path d="M1314 526h100v92h-100z" fill="url(#hatch)"/>
        <g stroke="#e2628a"><path d="M809.500 172v400M911.500 172v354.500M911 526.500h503M409 618.500h1005"/></g>
        <path d="M809 526.500h102" stroke="#555"/>
        <g stroke="#77767c">
          <ellipse cx="938.500" cy="193.500" rx="20" ry="18" stroke="#111" stroke-width="1.500"/><path d="M926 182q-8 10 0 24" stroke="#e2d400" stroke-width="3"/>
          <path d="M938.500 172v43M911 193.500h50" stroke="#222"/>
          <path d="M911 227.500h54M985 223.500h-20.500V543M911 411.500h79M1277 411.500h137"/>
        </g>
        <!-- duct -->
        <path d="M990 380h287v146H990zM990 618h287v382H990z" fill="#0f0"/>
        <path d="M990.500 526v92M1277.500 526v92M1134.500 526v106" stroke="#3fce3f"/>
        <path d="M1134.500 414v56" stroke="#0fae0f"/>
        <path d="M951.500 526.500h20v91h-20zM1298 526.500h16v91h-16z" fill="#c9c6cb" stroke="#66656b"/>
        <g stroke="#55545a">
          <path d="M971 526.500L1134.500 572.500 971 618z" fill="#fde98f"/>
          <path d="M1298 526.500L1134.500 572.500 1296 618h2z" fill="#fde98f"/>
          <path d="M990.500 532v80M1277.500 532v80" stroke="#b9dd52"/>
          <path d="M1295.500 543v75M965 543.500h336.500v-17"/>
          <path d="M966.500 526.500h4v17h-4zM1297.500 526.500h3v17h-3z" fill="#7b4336"/>
          <path d="M1260 380l17 31Q1301 465 1301.500 527"/>
          <path d="M1337 526l77-69M971 572L932 770"/>
        </g>
        <path d="M990 618.500h287" stroke="#9c5a1a"/>
        <!-- shelf and cavity wall -->
        <g stroke="#66656b"><path d="M409 462.500h400M420.500 462v110M788.500 462v110M409 464l400 108M809 462L409 570"/></g>
        <path d="M409 582h400v27H409z" fill="url(#hex)"/>
        <path d="M409 572h400v10H409zM409 609h400v9H409z" fill="#4a79b4"/>
        <path d="M409 577.500h400M409 582h400M409 609h400M409 613.500h400M809 572v46" stroke="#264a7c"/>
        <path d="M409 572.500h400" stroke="#c05a86" stroke-dasharray="20 34"/>
        <!-- axes and board joints -->
        <path d="M859.500 172v610M859.500 828v172" stroke="#85849f" stroke-dasharray="37 10 14 9"/>
        <path d="M815 572.500h525" stroke="#7f7f9c" stroke-dasharray="40 11 14 11"/>
        <path d="M1411.500 380v620" stroke="#a9a9cc" stroke-width="2" stroke-dasharray="31 12 13 12"/>
        <path d="M409 628.500h964" stroke="#66656b"/>
        <path d="M427.500 618v382M504.500 618v382M581.500 618v86M658.500 618v86M735.500 618v86M581.500 828v172M658.500 828v172M735.500 828v172M812.500 618v165M889.500 618v165M812.500 828v172M889.500 828v172M966.500 618v382M1351.500 618v382M505 812.500h62" stroke="#b4b2b7"/>
        <!-- elevation marker -->
        <path d="M442.500 550L356 628.500h25.500a61 55 0 0 1 122 0H528z" fill="#0435bb"/>
        <ellipse cx="442.500" cy="628.500" rx="61" ry="55" stroke="#8493d8"/>
        <path d="M409 628.500h95" stroke="#5f86e0"/>
        <path d="M441 603.500h7M431 649.500h8M440 649.500h8M449.500 649.500h8" stroke="#0435bb" stroke-width="3"/>
        <!-- small duct -->
        <path d="M1355 526h59v15zM1358 618v-36h56v8z" fill="#fde98f" stroke="#77756d"/>
        <path d="M1363 543h51v37h-51z" fill="#fff"/>
        <path d="M1312.500 529.500h102v51h-102zM1354.500 525h60M1354.500 525v56h60M1358.500 529v51M1363.500 529v51M1356 528l58 28M1363 548h51M1363 553h51M1363 558h51M1363 563h51M1363 568h51M1363 573h51" stroke="#444"/>
        <circle cx="1408.500" cy="545.500" r="4" fill="#fff" stroke="#222"/><circle cx="1408.500" cy="545.500" r="1" fill="#222"/>
        <text x="1340" y="568" class="note">15</text>
        <path d="M1373 545h21v83h-21z" fill="#000"/>
        <text x="567" y="740" class="note">WD - TK</text>
        <text x="567" y="781" class="note">80/ 45 cm</text>
        <text x="567" y="819" class="note">0.100 m OK - UKD</text>
      </svg>
      <div class="vscroll"><i></i></div>
    </div>
  </section>

  <aside class="right">
    <div class="rtabs">
      <button aria-label="Vorschau"></button>
      <button aria-label="Raster"><svg width="24" height="22" stroke="#bab8bd" stroke-width="3"><path d="M2 2h7v6H2zM14 2h7v6h-7zM2 13h7v6H2zM14 13h7v6h-7z"/></svg></button>
      <button class="cur" aria-label="Warnungen"><svg width="32" height="28" stroke="#3c3c3f" stroke-width="2"><path d="M16 3L2 25h28z" stroke-linejoin="round"/><path d="M16 10v8M16 20v3"/></svg></button>
      <div class="side"><button class="q" aria-label="Hilfe">?</button><button class="m" aria-label="Menü"><svg class="car"><use href="#caret"/></svg></button></div>
    </div>
    <div class="green"></div>
    <div class="pick">
      <div class="line"><span class="sel"><select aria-label="System"><option></option></select><svg class="chv"><use href="#chev"/></svg></span><button class="sq2">...</button></div>
      <div class="line"><span class="sel"><select aria-label="Bezug"><option></option></select><svg class="chv"><use href="#chev"/></svg></span><input class="mm" type="text" aria-label="Höhe" value="0 mm"><button class="sq2" aria-label="Position wählen"><svg width="14" height="14" stroke="#333"><circle cx="7" cy="7" r="4"/><path d="M7 0v5M7 9v5M0 7h5M9 7h5"/></svg></button></div>
      <button class="act" aria-label="Platzieren"></button>
    </div>
    <div class="acts">
      <div class="pair"><button class="act">Platzhalter <span>&lt;</span></button><button class="drop" aria-label="Aufklappen"><svg class="chv"><use href="#chev"/></svg></button></div>
      <div class="pair"><button class="act">Automatische Platzhalter <span>&lt;</span></button><button class="drop" aria-label="Aufklappen"><svg class="chv"><use href="#chev"/></svg></button></div>
      <button class="act">Zusammenfassen <span>&lt;</span></button>
      <button class="act">Exportieren ...</button>
      <button class="act">Koordinieren ...</button>
      <div class="group">
        <div class="pair"><button class="act">Beschriften <span>&lt;</span></button><button class="drop up" aria-label="Zuklappen"><svg class="chv"><use href="#chev"/></svg></button></div>
        <div class="fields">
          <span class="sel"><select aria-label="Beschriftungstyp"><option>Durchbruch rechteckig</option></select><svg class="chv"><use href="#chev"/></svg></span>
          <span class="sel"><select aria-label="Höhenbezug"><option>OK - UKD</option></select><svg class="chv"><use href="#chev"/></svg></span>
        </div>
      </div>
      <button class="act">Parameter aktualisieren <span>&lt;</span></button>
    </div>
  </aside>
</main>

<div class="dialog" role="dialog" aria-labelledby="dt">
  <header><h2 id="dt">Optionen</h2><button aria-label="Hilfe">?</button><button aria-label="Schließen"><svg width="12" height="12" stroke="#222"><path d="M1 1l10 10M11 1L1 11"/></svg></button></header>
  <div class="dbody">
    <nav><a href="#">Allgemein</a><a href="#">Building Analyse</a><a href="#">Systemtypen</a><a href="#">Ansichtenverwaltung</a><a class="cur" href="#">Durchbruchsplanung</a><a href="#">Reports und Aufgaben</a></nav>
    <div class="page">
      <h3>Durchbruchsplanung</h3>
      <div class="content">
        <table>
          <thead><tr><th>Typ</th><th class="k">Kürzel</th></tr></thead>
          <tbody>
            <tr><td>Wanddurchbruch</td><td>WD</td></tr>
            <tr><td>Deckendurchbruch</td><td>DD</td></tr>
            <tr><td>Fußbodendurchbruch</td><td>FD</td></tr>
            <tr><td>Wandschlitz</td><td>WS</td></tr>
            <tr><td>Deckenschlitz</td><td>DS</td></tr>
            <tr><td>Fußbodenschlitz</td><td>FS</td></tr>
          </tbody>
        </table>
        <div class="round"><label for="rd">Platzhaltermaße aufrunden</label><input id="rd" type="text" value="0 mm"></div>
        <div class="dbtns"><button class="default">OK</button><button>Abbrechen</button><button disabled>Übernehmen</button></div>
      </div>
    </div>
  </div>
  <svg class="grip" width="12" height="12" stroke="#c4c2c6" stroke-dasharray="2 2"><path d="M10 1v10M6 5v6M2 9v2" stroke-width="2"/></svg>
  <svg class="pointer" width="26" height="38" viewBox="0 0 26 38"><path d="M2 2v28l6.500-6L13 34.500q3 2 5-1L13.500 23H23z" fill="#fff" stroke="#1a1a1a" stroke-width="2"/></svg>
</div>
</body>
</html>
```
FILE: styles.css
```css
:root {
  --bar: #cdcbce;
  --panel: #f0eef1;
  --line: #c6c4c8;
  --ink: #48474b;
  --soft: #b7b5ba;
}
* { box-sizing: border-box; }
body {
  margin: 0;
  min-height: 100vh;
  display: flex;
  flex-direction: column;
  background: var(--panel);
  color: var(--ink);
  font: 11px/16px "Open Sans", "Noto Sans", sans-serif;
  position: relative;
  overflow: hidden;
}
svg { fill: none; flex: none; display: block; }
svg:not([stroke]) { stroke: currentColor; }
.defs { position: absolute; }
button, input, select { font: inherit; color: inherit; margin: 0; padding: 0; border-radius: 0; }
button { background: none; border: 0; display: flex; align-items: center; justify-content: center; }
a { color: inherit; text-decoration: none; }
h1, h2, h3 { margin: 0; font-size: 11px; font-weight: 400; }
ul { margin: 0; padding: 0; list-style: none; }
.i16 { width: 16px; height: 16px; }
.i32 { width: 30px; height: 28px; }
.car { width: 8px; height: 8px; color: #57565a; }
.car.wide { width: 10px; height: 10px; color: #333; }

/* title bar */
.titlebar {
  height: 27px;
  flex: none;
  background: var(--bar);
  border-top: 1px solid #a9b9ba;
  display: flex;
  align-items: flex-start;
  padding: 1px 2px 0 4px;
}
.quick { display: flex; align-items: center; gap: 7px; height: 20px; width: 879px; flex: none; color: #858388; }
.quick button { height: 18px; gap: 4px; }
.quick .gapl { margin-left: 6px; }
.quick .logo { width: 18px; height: 19px; background: #1a62e8; border-bottom: 4px solid #0c3990; color: #fff; font-weight: 700; font-size: 13px; line-height: 14px; }
.quick .letter { width: 14px; font-weight: 700; font-size: 18px; color: #747277; }
.quick .narrow { width: 14px; }
.quick .on { width: 24px; margin: 0 -2px; background: #c3daf4; outline: 1px solid #5d96da; }
.vsep { width: 1px; height: 18px; background: #b7b5b9; }
.titlebar h1 { line-height: 15px; flex: 1; font-size: 11px; }
.account { display: flex; align-items: center; gap: 8px; height: 20px; margin-right: 58px; }
.account .user { gap: 5px; }
.account .late { margin: 0 2px 0 29px; }
.account .help { width: 17px; height: 17px; border: 1px solid #5c79b8; border-radius: 50%; background: #f2f6fd; color: #2350a8; font-weight: 700; margin-left: 8px; }
.winbtns { display: flex; gap: 10px; height: 20px; align-items: center; }

/* ribbon tabs */
.tabs { height: 17px; flex: none; background: var(--bar); display: flex; gap: 1px; padding-left: 2px; }
.tabs a { padding: 0 9px; line-height: 17px; white-space: nowrap; }
.tabs .file { background: #267db3; color: #e6f1f7; padding: 0 8px; margin-right: 4px; }
.tabs .active { background: var(--panel); }
.tabmenu { margin-left: 21px; }

/* ribbon */
.ribbon { height: 85px; flex: none; display: flex; border-bottom: 1px solid #cfcdd1; color: var(--soft); }
.ribbon section { display: flex; flex-direction: column; border-right: 1px solid #dddbdf; flex: none; }
.ribbon section:last-child { border: 0; }
.ribbon h2 { color: var(--ink); text-align: center; display: flex; justify-content: center; align-items: center; gap: 4px; line-height: 14px; white-space: nowrap; }
.tools { height: 70px; display: flex; justify-content: center; padding-top: 6px; gap: 8px; }
.tools.col { flex-direction: column; align-items: center; justify-content: flex-start; gap: 3px; }
.tools .on { width: 37px; height: 29px; background: #c5daf3; border: 1px solid #6a9fe0; }
.big { flex-direction: column; justify-content: flex-start; }
.big span { line-height: 16px; margin-top: 10px; }
.big svg:first-child { margin-top: 4px; }
.big.paste svg:first-child, .big.wide svg:first-child { margin-top: 0; }
.big.paste span { margin-top: 2px; }
.big.wide span { margin-top: 4px; }
.small { display: grid; grid-template-rows: repeat(3, 16px); row-gap: 5px; column-gap: 9px; align-content: start; }
.small button { justify-content: flex-start; gap: 6px; }
.words button { gap: 5px; }
.three { grid-template-columns: repeat(3, 16px); }
.large { display: grid; grid-template-rows: repeat(2, 28px); row-gap: 3px; column-gap: 8px; align-content: start; }
.four { grid-template-columns: repeat(4, 30px); }
.two { grid-template-columns: repeat(2, 30px); }
.large.one button { gap: 6px; }
.g-sel, .g-prop { width: 82px; }
.g-clip { width: 97px; }
.g-geo { width: 171px; }
.g-ctl { width: 91px; }
.g-mod { width: 233px; }
.g-view { width: 63px; }
.g-mea { width: 56px; }
.g-new { width: 82px; }
.g-clip .tools { gap: 14px; }
.g-geo .tools { gap: 9px; justify-content: flex-start; padding-left: 7px; }
.g-view .tools { gap: 4px; }
.optionbar { height: 24px; flex: none; border-bottom: 1px solid #bab8bc; background: var(--panel); }

/* work area */
.work { flex: 1; display: grid; grid-template-columns: 407px 1fr 440px; min-height: 0; }
.left { border-left: 1px solid #a9aeb3; border-right: 3px solid #d3d1d5; display: flex; flex-direction: column; }
.ptitle { line-height: 20px; padding: 0 3px; height: 19px; }
.ptab { align-self: flex-start; height: 19px; gap: 5px; padding: 0 8px 0 7px; margin-left: 1px; background: #fff; border: 1px solid var(--line); border-bottom: 0; color: #5c5b60; }
.props { margin: 0 1px; background: #fff; border: 1px solid #dddbdf; height: 357px; padding: 8px 9px; display: flex; flex-direction: column; }
.props h3 { font-weight: 700; color: #2c2b2f; line-height: 17px; }
.props .row { display: flex; gap: 3px; height: 22px; align-items: center; color: #77757b; }
.props label { width: 190px; }
.props .row input[type=text] { width: 158px; height: 19px; border: 1px solid #c3c1c5; background: #fff; color: var(--ink); padding: 0 2px; }
.props .sel { flex: 1; color: var(--ink); }
.props .sel select { padding-left: 5px; }
.props .row:nth-of-type(2) .sel { flex: 0 0 158px; }
.props h3 ~ h3 { margin: 8px 0 2px; }
.sq { width: 27px; height: 19px; border: 1px solid #5d5c61; background: #eeecf0; }
.props .chk { height: 15px; }
input[type=checkbox] { appearance: none; width: 14px; height: 13px; border: 1px solid #8b898e; background: #fff; display: grid; place-items: center; }
input[type=checkbox]:checked::before { content: ""; width: 8px; height: 4px; border: solid #222; border-width: 0 0 2px 2px; rotate: -45deg; translate: 0 -1px; }
.sel { position: relative; display: flex; height: 19px; }
.sel select { appearance: none; width: 100%; border: 1px solid #c3c1c5; background: linear-gradient(#f1eff3, #e5e3e7); padding: 0 8px 1px 4px; }
.sel .chv { position: absolute; right: 6px; top: 5px; }
.chv { width: 10px; height: 8px; }
.apply { height: 25px; display: flex; justify-content: flex-end; padding: 2px 1px 0; }
.apply button { width: 78px; height: 20px; }
button.default { border: 2px solid #1c1b1f; }
.docktabs { display: flex; height: 20px; background: var(--bar); color: #b4b2b7; }
.docktabs a { padding: 0 7px; line-height: 19px; }
.docktabs .cur { background: var(--panel); padding: 0 5px; color: #c2c0c5; }
.browser { height: 20px; line-height: 20px; border-top: 1px solid #bab8bc; }

/* project tree */
.tree { background: #fff; flex: 1; color: #444348; }
.tree li { height: 16px; display: flex; align-items: center; line-height: 16px; white-space: pre; background: linear-gradient(#dcdade, #dcdade) 9px 0 / 1px 100% no-repeat; }
.tree li:nth-child(even) { height: 17px; }
.tree .bx { width: 11px; height: 11px; }
.tree .ic { width: 16px; height: 14px; margin: 0 3px 0 5px; }
.tree .vw { width: 17px; height: 16px; margin-right: 3px; }
.tree .hl { background: #e3e1e5; padding: 0 2px; margin-left: -1px; }
.tree b { color: #1b1a1e; }
.l0 { padding-left: 4px; }
.l1 { padding-left: 24px; }
.l2 { padding-left: 43px; }
.l1 .bx, .l2 .bx { margin-right: 10px; }
.l3 { padding-left: 79px; }
.tree .l1, .tree .l2, .tree .l3 { background: linear-gradient(#dcdade, #dcdade) 9px 0 / 1px 100% no-repeat, linear-gradient(#dcdade, #dcdade) 29px 0 / 1px 100% no-repeat; }
.tree .l3 { background: linear-gradient(#dcdade, #dcdade) 9px 0 / 1px 100% no-repeat, linear-gradient(#dcdade, #dcdade) 29px 0 / 1px 100% no-repeat, linear-gradient(#dcdade, #dcdade) 68px 0 / 1px 50% no-repeat, linear-gradient(#dcdade, #dcdade) 68px 50% / 10px 1px no-repeat; }
.tree .l3.more { background: linear-gradient(#dcdade, #dcdade) 9px 0 / 1px 100% no-repeat, linear-gradient(#dcdade, #dcdade) 29px 0 / 1px 100% no-repeat, linear-gradient(#dcdade, #dcdade) 48px 0 / 1px 100% no-repeat, linear-gradient(#dcdade, #dcdade) 68px 50% / 10px 1px no-repeat; }
.tree .end { background: linear-gradient(#dcdade, #dcdade) 9px 0 / 1px 100% no-repeat; }

/* drawing view */
.center { display: flex; flex-direction: column; min-width: 0; }
.viewtabs { height: 19px; background: var(--bar); display: flex; }
.vtab { width: 157px; background: #fff; display: flex; align-items: center; padding: 0 4px 0 5px; gap: 7px; color: #c0bec3; font-weight: 700; white-space: nowrap; }
.vtab > svg { color: #66656a; }
.vtab span { flex: 1; }
.canvas { flex: 1; display: flex; min-height: 0; background: #fff; padding-left: 2px; }
.canvas .drawing { flex: 1; min-width: 0; width: 0; height: 828px; stroke: none; }
.note { font: 42px "Liberation Sans", Arial, sans-serif; fill: #000; stroke: none; }
.vscroll { width: 19px; background: var(--panel); display: flex; flex-direction: column; align-items: center; }
.vscroll i { width: 7px; height: 15px; margin-top: 416px; background: #8d8b90; margin-right: 3px; }

/* planning panel */
.right { border-left: 4px double #c2c0c4; background: #fff; display: flex; flex-direction: column; color: #4a494d; }
.rtabs { height: 55px; padding-top: 20px; background: var(--panel); display: flex; justify-content: flex-end; border-bottom: 1px solid #dbe6de; }
.rtabs > button { width: 84px; border-left: 1px solid #d8d6da; border-top: 1px solid #e2e0e4; }
.rtabs > button:first-child { flex: 1; }
.rtabs > .cur { border: 1px solid #c0bec2; border-bottom: 0; }
.side { width: 20px; padding: 1px 0 0 6px; display: flex; flex-direction: column; gap: 3px; overflow: hidden; }
.side button { flex: none; width: 14px; height: 14px; border: 1px solid #333; color: #222; font-weight: 700; }
.side .q { border-radius: 50%; }
.green { height: 64px; background: linear-gradient(#aec5b5, #dbe4dd); }
.pick { background: linear-gradient(#f2f0f3 74px, #fff 92px); height: 120px; padding: 1px 4px 0 7px; display: flex; flex-direction: column; gap: 3px; }
.line { display: flex; gap: 4px; height: 20px; margin-right: -2px; }
.line .sel { flex: 1; height: 20px; }
.mm { width: 78px; border: 1px solid #c3c1c5; text-align: right; padding: 0 2px; background: #fff; }
.sq2 { width: 24px; border: 1px solid #55545a; background: #f0eef1; }
.pick .act { margin-top: 7px; }
.acts { display: flex; flex-direction: column; gap: 3px; padding: 0 4px 0 7px; }
.act { height: 20px; border: 1px solid #55545a; background: #f1eff2; justify-content: flex-start; padding: 0 10px; gap: 4px; font-weight: 700; color: #38373b; flex: none; }
.act span { font-weight: 400; }
.pair { display: flex; }
.pair .act { flex: 1; border-right: 0; }
.drop { width: 18px; border: 1px solid #55545a; background: #f7f5f8; color: #111; }
.drop .chv { stroke-width: 2; }
.drop.up { border-bottom: 0; background: #fff; }
.drop.up .chv { rotate: 180deg; }
.group .fields { border: 1px solid #55545a; border-top: 0; padding: 4px 5px; display: grid; gap: 4px; }
.fields .sel { height: 20px; color: #6b696f; }

/* options dialog */
.dialog { position: absolute; left: 985px; top: 48px; width: 668px; height: 344px; background: #fff; border: 1px solid #c3c1c6; border-radius: 8px; display: flex; flex-direction: column; color: #444a55; box-shadow: 0 1px 2px #0002; }
.dialog header { height: 26px; display: flex; align-items: center; padding: 0 14px 2px 7px; border-bottom: 1px solid #d6d4d8; color: #222; }
.dialog header h2 { flex: 1; }
.dialog header button { width: 14px; margin-left: 30px; }
.dbody { flex: 1; display: flex; }
.dialog nav { width: 145px; border-right: 1px solid #c9c7cc; }
.dialog nav a { display: block; height: 30px; line-height: 31px; padding-left: 9px; }
.dialog nav .cur { background: #7590c3; color: #1f2b45; }
.page { flex: 1; display: flex; flex-direction: column; }
.page h3 { height: 25px; line-height: 25px; background: #c1cbde; padding-left: 5px; font-size: 12px; color: #5a6478; }
.content { flex: 1; padding: 17px 8px 6px 10px; display: flex; flex-direction: column; }
table { width: 100%; border-collapse: separate; border-spacing: 0; border: 1px solid #a9a9bd; border-bottom-width: 2px; }
th, td { padding: 0 3px; font-weight: 400; text-align: left; height: 17px; line-height: 16px; border-bottom: 1px solid #dddbe0; }
th { height: 21px; padding: 0 5px; background: linear-gradient(#fff, #f4f3f7); }
tr > :last-child { border-left: 1px solid #dddbe0; }
tbody tr:last-child td { border-bottom: 0; line-height: 14px; height: 14px; }
.k { width: 59px; }
.round { display: flex; align-items: center; gap: 7px; padding: 7px 5px 0; }
.round input { width: 36px; height: 20px; border: 1px solid #c3c1c6; padding: 0 2px; background: #fff; }
.dbtns { margin-top: auto; display: flex; justify-content: flex-end; gap: 5px; }
.dbtns button { width: 78px; height: 20px; border: 1px solid #6f6e74; background: #f2f0f3; }
.dbtns .default { border: 2px solid #1c1b1f; }
.dbtns button:disabled { color: #bdbbc0; }
.grip { position: absolute; right: 2px; bottom: 1px; }
.pointer { position: absolute; left: 623px; top: 100px; }
```
